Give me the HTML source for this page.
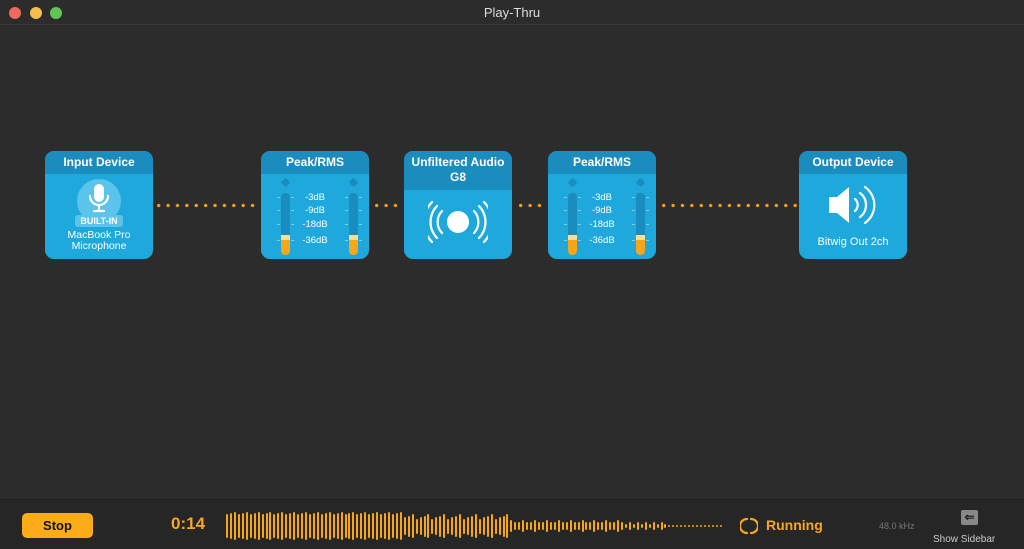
<!DOCTYPE html>
<html><head><meta charset="utf-8"><style>
*{margin:0;padding:0;box-sizing:border-box}
body{width:1024px;height:549px;background:#2c2c2c;font-family:"Liberation Sans",sans-serif;position:relative;overflow:hidden;color:#fff}
.title{position:absolute;left:0;top:0;width:1024px;height:25px;background:#2c2c2c;border-bottom:1px solid #3a3a3a;text-align:center;font-size:13px;line-height:25px;color:#ddd}
.tl{position:absolute;top:7px;width:12px;height:12px;border-radius:50%}
.card{position:absolute;top:151px;width:108px;height:108px;border-radius:9px;background:#1ea8dc;overflow:hidden}
.card .h{height:23px;background:#1a8cbd;font-size:12px;font-weight:bold;text-align:center;line-height:23px}
.dots{position:absolute;top:203px;height:5px;background:radial-gradient(circle,#f0a020 1.5px,transparent 1.9px) 0 0/9.4px 5px repeat-x}
.bot{position:absolute;left:0;top:499px;width:1024px;height:50px;background:#262626;border-top:1px solid #1e1e1e}
</style></head><body>
<div class="title">Play-Thru</div>
<div class="tl" style="left:9px;background:#ec6a5e"></div>
<div class="tl" style="left:30px;background:#f4bf4f"></div>
<div class="tl" style="left:50px;background:#61c554"></div>

<div class="card" style="left:45px"><div class="h">Input Device</div>
<div style="position:absolute;left:32px;top:28px;width:44px;height:44px;border-radius:50%;background:#5cc3ea"></div>
<svg style="position:absolute;left:40px;top:32px" width="28" height="34" viewBox="0 0 28 34"><rect x="9" y="1" width="10" height="18" rx="5" fill="#fff"/><path d="M5 13a9 9 0 0 0 18 0M14 22v6M9 28h10" stroke="#fff" stroke-width="2.2" fill="none" stroke-linecap="round"/></svg>
<div style="position:absolute;left:30px;top:64px;width:48px;height:12px;background:#5cc3ea;border-radius:3px;font-size:9px;font-weight:bold;text-align:center;line-height:12px">BUILT-IN</div>
<div style="position:absolute;top:79px;width:100%;text-align:center;font-size:10.5px;line-height:11px">MacBook Pro<br>Microphone</div></div>

<div class="dots" style="left:154px;width:104px"></div>

<div class="card" style="left:261px" id="p1"><div class="h">Peak/RMS</div></div>
<div class="dots" style="left:372px;width:30px"></div>
<div class="card" style="left:404px"><div class="h" style="height:39px;line-height:15px;padding-top:4px">Unfiltered Audio<br>G8</div>
<svg style="position:absolute;left:24px;top:48px" width="60" height="46" viewBox="0 0 60 46"><circle cx="30" cy="23" r="11" fill="#fff"/><g stroke="#fff" stroke-width="2.2" fill="none" stroke-linecap="round"><path d="M14 12a16 16 0 0 0 0 22M46 12a16 16 0 0 1 0 22M9 7a23 23 0 0 0 0 32M51 7a23 23 0 0 1 0 32M4 3a29 29 0 0 0 0 40M56 3a29 29 0 0 1 0 40"/></g></svg></div>
<div class="dots" style="left:516px;width:30px"></div>
<div class="card" style="left:548px" id="p2"><div class="h">Peak/RMS</div></div>
<div class="dots" style="left:659px;width:138px"></div>
<div class="card" style="left:799px"><div class="h">Output Device</div>
<svg style="position:absolute;left:28px;top:34px" width="50" height="40" viewBox="0 0 50 40"><path d="M2 12h8l12-10v36L10 28H2z" fill="#fff"/><g stroke="#fff" stroke-width="2.2" fill="none" stroke-linecap="round"><path d="M28 14a8 8 0 0 1 0 12M33 8a15 15 0 0 1 0 24M38 2a22 22 0 0 1 0 36"/></g></svg>
<div style="position:absolute;top:85px;width:100%;text-align:center;font-size:11px">Bitwig Out 2ch</div></div>

<div class="bot">
<div style="position:absolute;left:22px;top:13px;width:71px;height:25px;background:#fbac18;border-radius:5px;color:#111;font-size:13px;text-align:center;line-height:25px;font-weight:bold">Stop</div>
<div style="position:absolute;left:171px;top:14px;font-size:17px;color:#f5a623;font-weight:bold">0:14</div>
<div id="wave" style="position:absolute;left:226px;top:12px;width:500px;height:28px"></div>
<svg style="position:absolute;left:740px;top:17px" width="18" height="18" viewBox="0 0 18 18"><path d="M7 2a7 7 0 0 0 0 14M11 2a7 7 0 0 1 0 14" stroke="#f5a623" stroke-width="2.2" fill="none" stroke-linecap="round"/></svg>
<div style="position:absolute;left:766px;top:17px;font-size:14px;color:#f5a623;font-weight:bold">Running</div>
<div style="position:absolute;left:879px;top:21px;font-size:9px;color:#777">48.0 kHz</div>
<div style="position:absolute;left:961px;top:10px;width:17px;height:15px;background:#888;border-radius:2px;color:#222;font-size:12px;text-align:center;line-height:15px;font-weight:bold">⇐</div>
<div style="position:absolute;left:933px;top:34px;font-size:10px;color:#ccc">Show Sidebar</div>
</div>
<script>
function meter(id){var c=document.getElementById(id),h='';
[[10,'l'],[78,'r']].forEach(function(a){var x=a[0]+10;
h+='<div style="position:absolute;left:'+(x+1)+'px;top:28px;width:7px;height:7px;background:#1a8cbd;transform:rotate(45deg);border-radius:2px"></div>';
h+='<div style="position:absolute;left:'+x+'px;top:42px;width:9px;height:62px;background:#1a8cbd;border-radius:4px;overflow:hidden"><div style="position:absolute;bottom:0;width:100%;height:15px;background:#f5a61b"></div><div style="position:absolute;bottom:15px;width:100%;height:5px;background:#f7dc9a"></div></div>';
[46,59,73,89].forEach(function(y){h+='<div style="position:absolute;left:'+(x-4)+'px;top:'+y+'px;width:17px;height:1px;background:linear-gradient(90deg,#7fcdec 3px,transparent 3px,transparent 14px,#7fcdec 14px)"></div>';});});
[['-3dB',46],['-9dB',59],['-18dB',73],['-36dB',89]].forEach(function(t){h+='<div style="position:absolute;left:30px;width:48px;top:'+(t[1]-5)+'px;font-size:9.5px;text-align:center">'+t[0]+'</div>';});
c.innerHTML+=h;}
meter('p1');meter('p2');
var w=document.getElementById('wave'),s='';
for(var i=0;i<126;i++){var x=i*3.95,hh;
if(i<45)hh=24+(i%3)*2;else if(i<72)hh=15+(i%4)*3;else if(i<100)hh=(i%3?8:12);else if(i<112)hh=(i%2?4:8);else hh=2;
s+='<div style="position:absolute;left:'+x+'px;top:'+(14-hh/2)+'px;width:2px;height:'+hh+'px;background:#f5a61b;border-radius:1px"></div>';}
w.innerHTML=s;
</script>
</body></html>
